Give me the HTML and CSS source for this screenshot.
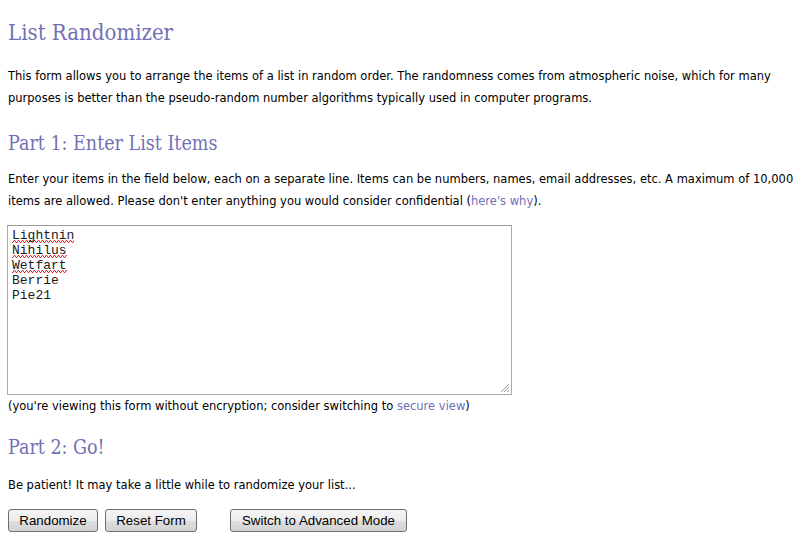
FILE: index.html
```html
<!DOCTYPE html>
<html>
<head>
<meta charset="utf-8">
<title>List Randomizer</title>
<link rel="stylesheet" href="styles.css">
</head>
<body>
<h1 class="title">List Randomizer</h1>
<p class="text intro">This form allows you to arrange the items of a list in random order. The randomness comes from atmospheric noise, which for many purposes is better than the pseudo-random number algorithms typically used in computer programs.</p>
<h2 class="part">Part 1: Enter List Items</h2>
<p class="text desc">Enter your items in the field below, each on a separate line. Items can be numbers, names, email addresses, etc. A maximum of 10,000 items are allowed. Please don't enter anything you would consider confidential (<a class="link" href="#">here's why</a>).</p>
<form class="form">
<div class="box">
<div class="lines"><span class="miss">Lightnin</span>
<span class="miss">Nihilus</span>
<span class="miss">Wetfart</span>
Berrie
Pie21</div>
<svg class="grip" width="11" height="11" viewBox="0 0 11 11"><path d="M10 2 L2 10 M10 5 L5 10 M10 8 L8 10" stroke="#9a9a9a" stroke-width="1"/></svg>
</div>
<div class="note">(you're viewing this form without encryption; consider switching to <a class="link" href="#">secure view</a>)</div>
<h2 class="part part2">Part 2: Go!</h2>
<p class="text go">Be patient! It may take a little while to randomize your list...</p>
<div class="buttons">
<button type="button" class="btn rand">Randomize</button>
<button type="reset" class="btn reset">Reset Form</button>
<button type="button" class="btn adv">Switch to Advanced Mode</button>
</div>
</form>
</body>
</html>
```
FILE: styles.css
```css
html, body { background: #fff; }
body {
  margin: 0;
  padding: 0 8px;
  font-family: "DejaVu Sans", sans-serif;
  font-size: 11.5px;
  color: #000;
}
.title {
  font-family: "DejaVu Serif Condensed", "Liberation Serif", serif;
  font-weight: normal;
  font-size: 22px;
  color: #7171b5;
  margin: 0;
  padding-top: 20px;
  padding-bottom: 4px;
  line-height: 26px;
}
.part {
  font-family: "DejaVu Serif Condensed", "Liberation Serif", serif;
  font-weight: normal;
  font-size: 19.5px;
  color: #7171b5;
  margin: 0;
  line-height: 24px;
}
.text {
  line-height: 22px;
  margin: 15px 0 0;
}
.intro { margin-bottom: 23px; }
.desc { margin-top: 12px; margin-bottom: 13px; }
.link { color: #7171b5; text-decoration: none; }
.form { margin: 0; }
.box {
  position: relative;
  width: 503px;
  height: 168px;
  border: 1px solid #ababab;
  border-top-color: #9c9c9c;
  margin-left: -1px;
  box-sizing: content-box;
}
.lines {
  white-space: pre;
  font-family: "Liberation Mono", monospace;
  font-size: 13px;
  line-height: 15px;
  padding: 2px 4px;
  color: #1a1a1a;
}
.miss {
  background-image: url("data:image/svg+xml,%3Csvg xmlns='http://www.w3.org/2000/svg' width='4' height='3'%3E%3Cpath d='M0 2.5 L1 2.5 L2 0.5 L3 0.5 L4 2.5' fill='none' stroke='%23d42a2a' stroke-width='1'/%3E%3C/svg%3E");
  background-repeat: repeat-x;
  background-position: 0 100%;
  background-size: 4px 3px;
}
.grip { position: absolute; right: 1px; bottom: 1px; }
.note { line-height: 20px; margin-top: 1px; }
.part2 { margin-top: 20px; }
.go { margin-top: 14px; }
.buttons { display: flex; gap: 7px; margin-top: 13px; }
.btn {
  font-family: "Liberation Sans", Arial, sans-serif;
  font-size: 13.3px;
  height: 23px;
  padding: 0;
  border: 1px solid #707070;
  border-radius: 3px;
  background: linear-gradient(#f4f4f4 0%, #ececec 50%, #dedede 51%, #d2d2d2 100%);
  color: #000;
  text-align: center;
}
.rand { width: 90px; }
.reset { width: 92px; }
.adv { width: 177px; margin-left: 26px; }
```
